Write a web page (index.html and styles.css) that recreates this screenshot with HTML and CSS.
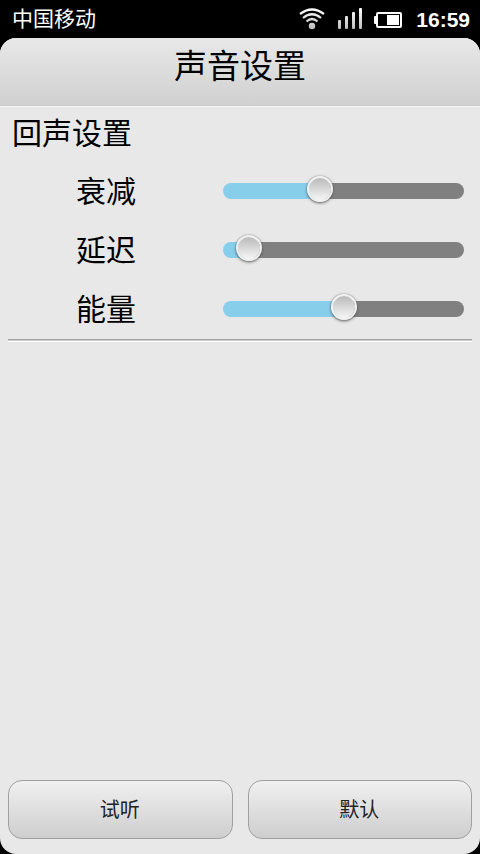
FILE: index.html
```html
<!DOCTYPE html>
<html lang="zh-CN">
<head>
<meta charset="utf-8">
<meta name="viewport" content="width=device-width, initial-scale=1">
<title>声音设置</title>
<link rel="stylesheet" href="styles.css">
</head>
<body>
<div class="status-bar">
  <span class="carrier">中国移动</span>
  <svg class="status-icon wifi" width="26" height="22" viewBox="0 0 26 22" aria-hidden="true">
    <defs><linearGradient id="fade" x1="0" y1="0" x2="0" y2="22" gradientUnits="userSpaceOnUse"><stop offset="0" stop-color="#fff"/><stop offset="1" stop-color="#bbb"/></linearGradient></defs>
    <g fill="none" stroke="url(#fade)" stroke-width="2.200">
      <path d="M1 6Q13 -3 25 6"/>
      <path d="M4 10Q13 2.500 22 10"/>
      <path d="M7.500 13.500Q13 8.500 18.500 13.500"/>
    </g>
    <circle cx="13" cy="18" r="3.200" fill="url(#fade)"/>
  </svg>
  <svg class="status-icon signal" width="24" height="22" viewBox="0 0 24 22" aria-hidden="true">
    <g fill="url(#fade)">
      <rect x="0" y="12" width="3" height="9" rx="1"/>
      <rect x="7" y="8" width="3" height="13" rx="1"/>
      <rect x="14" y="4" width="3" height="17" rx="1"/>
      <rect x="21" y="0" width="3" height="21" rx="1"/>
    </g>
  </svg>
  <svg class="status-icon battery" width="28" height="18" viewBox="0 0 28 18" aria-hidden="true">
    <rect x="3" y="3" width="24" height="14" rx="1" fill="none" stroke="#fff" stroke-width="2"/>
    <rect x="0" y="6" width="3" height="8" rx="1" fill="#fff"/>
    <rect x="13" y="5" width="12" height="10" fill="#fff"/>
  </svg>
  <time class="clock">16:59</time>
</div>
<div class="screen">
  <header class="title-bar"><h1>声音设置</h1></header>
  <main class="content">
    <h2 class="section-title">回声设置</h2>
    <div class="row">
      <label for="decay">衰减</label>
      <input id="decay" class="slider" type="range" min="0" max="100" value="39" style="--value: 39">
    </div>
    <div class="row">
      <label for="delay">延迟</label>
      <input id="delay" class="slider" type="range" min="0" max="100" value="6" style="--value: 6">
    </div>
    <div class="row">
      <label for="energy">能量</label>
      <input id="energy" class="slider" type="range" min="0" max="100" value="50" style="--value: 50">
    </div>
    <hr class="divider">
  </main>
  <footer class="actions">
    <button class="button" type="button">试听</button>
    <button class="button" type="button">默认</button>
  </footer>
</div>
</body>
</html>
```

FILE: styles.css
```css
* {
  box-sizing: border-box;
}

body {
  margin: 0;
  min-height: 100vh;
  display: flex;
  flex-direction: column;
  background: #000;
  color: #000;
  font-family: "Noto Sans CJK SC", sans-serif;
}

.status-bar {
  display: flex;
  align-items: center;
  height: 38px;
  padding: 0 10px 0 12px;
  color: #fff;
}

.carrier {
  margin-right: auto;
  padding-bottom: 4px;
  font-size: 21px;
  line-height: 34px;
}

.status-icon {
  flex: none;
}

.signal {
  margin-left: 13px;
}

.battery {
  margin-left: 12px;
}

.clock {
  margin-left: 14px;
  padding-top: 2px;
  font: bold 21px/36px "Liberation Sans", sans-serif;
}

.screen {
  flex: 1;
  display: flex;
  flex-direction: column;
  overflow: hidden;
  border-radius: 16px;
  background: #e8e8e8;
}

.title-bar {
  height: 69px;
  border-bottom: 1px solid #f8f8f8;
  background: linear-gradient(#e8e8e8, #d0d0d0);
  box-shadow: inset 0 -1px #c8c8c8;
  text-align: center;
}

.title-bar h1 {
  margin: 0;
  font-size: 33px;
  font-weight: 400;
  line-height: 53px;
}

.content {
  flex: 1;
}

.section-title {
  margin: 0 0 7px;
  padding: 0 12px;
  font-size: 30px;
  font-weight: 400;
  line-height: 48px;
}

.row {
  display: grid;
  grid-template-columns: 212px 1fr;
  column-gap: 11px;
  align-items: center;
  height: 59px;
  padding: 0 16px 2px 0;
}

.row label {
  padding-bottom: 3px;
  font-size: 30px;
  line-height: 54px;
  text-align: center;
}

.slider {
  appearance: none;
  width: 100%;
  height: 16px;
  margin: 0;
  background: none;
}

.slider::-webkit-slider-runnable-track {
  height: 16px;
  border-radius: 8px;
  background: linear-gradient(#87ceeb, #87ceeb) 0 0 / calc(13px + (100% - 26px) * var(--value) / 100) 100% no-repeat #808080;
}

.slider::-webkit-slider-thumb {
  appearance: none;
  width: 26px;
  height: 26px;
  margin-top: -7px;
  border: 2px solid #f0f0f0;
  border-radius: 50%;
  background: linear-gradient(#bababa, #f6f6f6) padding-box;
  box-shadow: 0 0 1px #777, 0 1px 3px #555;
}

.divider {
  height: 3px;
  margin: 0 8px;
  border: 0;
  border-top: 1px solid #a4a4a4;
  border-bottom: 1px solid #fff;
  background: #ccc;
}

.actions {
  display: grid;
  grid-template-columns: 1fr 1fr;
  gap: 15px;
  padding: 0 8px 15px;
}

.button {
  height: 59px;
  padding: 0 1px 2px 0;
  border: 1px solid #a0a0a0;
  border-radius: 14px;
  background: linear-gradient(#f0f0f0, #cecece);
  color: #222;
  font: 20px/54px "Noto Sans CJK SC", sans-serif;
}
```
